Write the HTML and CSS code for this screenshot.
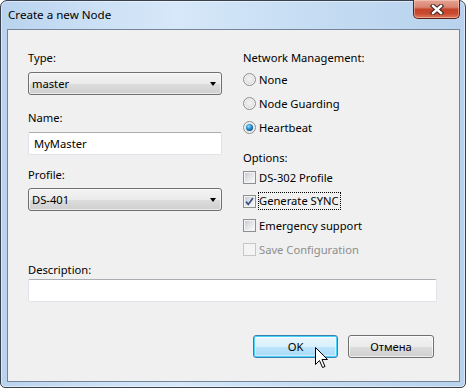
FILE: index.html
```html
<!DOCTYPE html>
<html>
<head>
<meta charset="utf-8">
<link rel="stylesheet" href="styles.css">
</head>
<body>
<div class="window">
  <div class="titlebar">
    <span class="title">Create a new Node</span>
    <div class="close">
      <svg width="14" height="11" viewBox="0 0 14 11"><path d="M3 2 L11 9 M11 2 L3 9" stroke="#3a2520" stroke-width="4.4" stroke-linecap="square" fill="none"/><path d="M3 2 L11 9 M11 2 L3 9" stroke="#ffffff" stroke-width="2.4" stroke-linecap="square" fill="none"/></svg>
    </div>
  </div>
  <div class="client">
    <div class="columns">
      <div class="col-left">
        <div class="field">
          <div class="label">Type:</div>
          <div class="combo first"><span>master</span><span class="arrow"></span></div>
        </div>
        <div class="field f-name">
          <div class="label">Name:</div>
          <div class="textbox">MyMaster</div>
        </div>
        <div class="field f-profile">
          <div class="label">Profile:</div>
          <div class="combo"><span>DS-401</span><span class="arrow"></span></div>
        </div>
      </div>
      <div class="col-right">
        <div class="label">Network Management:</div>
        <div class="opts radios">
          <div class="opt"><span class="radio"></span><span>None</span></div>
          <div class="opt"><span class="radio"></span><span>Node Guarding</span></div>
          <div class="opt"><span class="radio on"><span class="dot"></span></span><span>Heartbeat</span></div>
        </div>
        <div class="label opt-label">Options:</div>
        <div class="opts">
          <div class="opt"><span class="check"></span><span>DS-302 Profile</span></div>
          <div class="opt"><span class="check"><svg width="9" height="9" viewBox="0 0 9 9"><path d="M1 4.6 L3.3 7.4 L8 1" stroke="#3b4f8a" stroke-width="1.7" fill="none"/></svg></span><span class="focus">Generate SYNC</span></div>
          <div class="opt"><span class="check"></span><span>Emergency support</span></div>
          <div class="opt disabled"><span class="check"></span><span>Save Configuration</span></div>
        </div>
      </div>
    </div>
    <div class="desc">
      <div class="label">Description:</div>
      <div class="textbox wide"></div>
    </div>
    <div class="buttons">
      <div class="btn default">OK</div>
      <div class="btn">Отмена</div>
    </div>
  </div>
  <svg class="cursor" width="13" height="22" viewBox="0 0 13 22"><path d="M0.5 0.5 L0.5 17.5 L4.5 13.5 L7.5 20.5 L10 19.5 L7 12.5 L12.5 12.5 Z" fill="#ffffff" stroke="#000000" stroke-width="1" stroke-linejoin="miter"/></svg>
</div>
</body>
</html>
```
FILE: styles.css
```css
* { box-sizing: border-box; }
html, body { margin: 0; padding: 0; }
body {
  width: 466px;
  height: 388px;
  overflow: hidden;
  background: #ffffff;
  font-family: "Noto Sans", "Open Sans", sans-serif;
  font-size: 11.2px;
  color: #000000;
}
.window {
  position: relative;
  width: 466px;
  height: 388px;
  border: 1px solid #39424c;
  border-radius: 7px 7px 5px 5px;
  background: linear-gradient(90deg, #b9d3ee 0%, #cde1f6 22%, #d6e8f9 38%, #c6ddf3 65%, #b8d2ed 100%);
  box-shadow: inset 0 0 0 1px rgba(255, 255, 255, 0.45);
  display: flex;
  flex-direction: column;
}
.titlebar {
  height: 28px;
  flex: none;
  display: flex;
  justify-content: space-between;
  align-items: flex-start;
}
.title {
  padding: 6px 0 0 7px;
  line-height: 15px;
  font-size: 11.6px;
}
.close {
  width: 47px;
  height: 19px;
  margin: -1px 5px 0 0;
  border: 1px solid #5e2318;
  border-top: none;
  border-radius: 0 0 5px 5px;
  background: linear-gradient(#e6a392 0%, #d98472 40%, #c4432a 52%, #c9492f 75%, #dc7a5c 100%);
  box-shadow: inset 0 0 0 1px rgba(255, 220, 210, 0.45);
  display: flex;
  align-items: center;
  justify-content: center;
}
.close svg { display: block; }
.client {
  flex: 1;
  margin: 0 5px 5px 6px;
  border: 1px solid #74859a;
  background: #f0f0f0;
  padding: 20px 21px 0 20px;
}
.columns {
  display: flex;
  gap: 21px;
}
.col-left {
  width: 194px;
  flex: none;
  display: flex;
  flex-direction: column;
}
.col-right {
  flex: 1;
  display: flex;
  flex-direction: column;
}
.label { line-height: 15px; white-space: nowrap; }
.combo {
  height: 23px;
  margin-top: 6px;
  border: 1px solid #707070;
  border-radius: 3px;
  background: linear-gradient(#f3f3f3 0%, #ebebeb 50%, #dddddd 51%, #cfcfcf 100%);
  box-shadow: inset 0 0 0 1px rgba(255, 255, 255, 0.6);
  display: flex;
  align-items: center;
  justify-content: space-between;
  padding: 0 5px 0 3px;
}
.combo.first { margin-top: 7px; }
.arrow {
  width: 0;
  height: 0;
  border-left: 3.5px solid transparent;
  border-right: 3.5px solid transparent;
  border-top: 4px solid #000000;
  margin-top: 1px;
}
.textbox {
  height: 23px;
  margin-top: 7px;
  background: #ffffff;
  border: 1px solid #e2e3ea;
  border-top-color: #abadb3;
  border-radius: 2px;
  padding: 0 5px;
  line-height: 21px;
}
.f-name { margin-top: 15px; }
.f-profile { margin-top: 12px; }
.opts {
  display: flex;
  flex-direction: column;
}
.radios { margin-top: 2px; }
.opt {
  height: 24px;
  display: flex;
  align-items: center;
  gap: 3px;
  white-space: nowrap;
}
.opt-label { margin-top: 11px; }
.radio {
  width: 13px;
  height: 13px;
  flex: none;
  border-radius: 50%;
  border: 1px solid #8e8f8f;
  background: radial-gradient(circle at 50% 45%, #f4f4f4 0%, #e2e2e2 55%, #cfcfcf 100%);
  box-shadow: inset 0 0 0 1px #f5f5f5;
  display: flex;
  align-items: center;
  justify-content: center;
}
.radio .dot {
  width: 7px;
  height: 7px;
  border-radius: 50%;
  background: radial-gradient(circle at 40% 35%, #9fe0ff 0%, #2d9ce0 35%, #0d528f 75%, #0b3d6b 100%);
}
.check {
  width: 13px;
  height: 13px;
  flex: none;
  border: 1px solid #8e8f8f;
  padding: 1px;
  background: linear-gradient(135deg, #c9cdd3 0%, #e6e8eb 55%, #f8f8f8 100%) content-box, #f4f4f4;
  display: flex;
  align-items: center;
  justify-content: center;
}
.check svg { display: block; }
.focus {
  border: 1px dotted #000000;
  line-height: 16px;
  margin-left: -1px;
  padding-right: 1px;
}
.disabled { color: #8d8d8d; }
.disabled .check {
  border-color: #c7c7c7;
  background: #f4f4f4;
}
.desc { margin-top: 1px; }
.textbox.wide {
  width: 409px;
  margin-top: 2px;
}
.buttons {
  display: flex;
  justify-content: flex-end;
  gap: 10px;
  margin-top: 33px;
  padding-right: 4px;
}
.btn {
  width: 86px;
  height: 23px;
  border: 1px solid #707070;
  border-radius: 3px;
  background: linear-gradient(#f3f3f3 0%, #ebebeb 50%, #dddddd 51%, #cfcfcf 100%);
  box-shadow: inset 0 0 0 1px rgba(255, 255, 255, 0.7);
  display: flex;
  align-items: center;
  justify-content: center;
  line-height: 15px;
}
.btn.default {
  width: 85px;
  border-color: #3c7fb1;
  background: linear-gradient(#eaf6fd 0%, #d9f0fc 50%, #bee6fd 51%, #a7d9f5 100%);
  box-shadow: inset 0 0 0 1px #48d2fb, inset 0 0 0 2px rgba(255, 255, 255, 0.5);
}
.cursor {
  position: absolute;
  left: 314px;
  top: 346px;
}
```
